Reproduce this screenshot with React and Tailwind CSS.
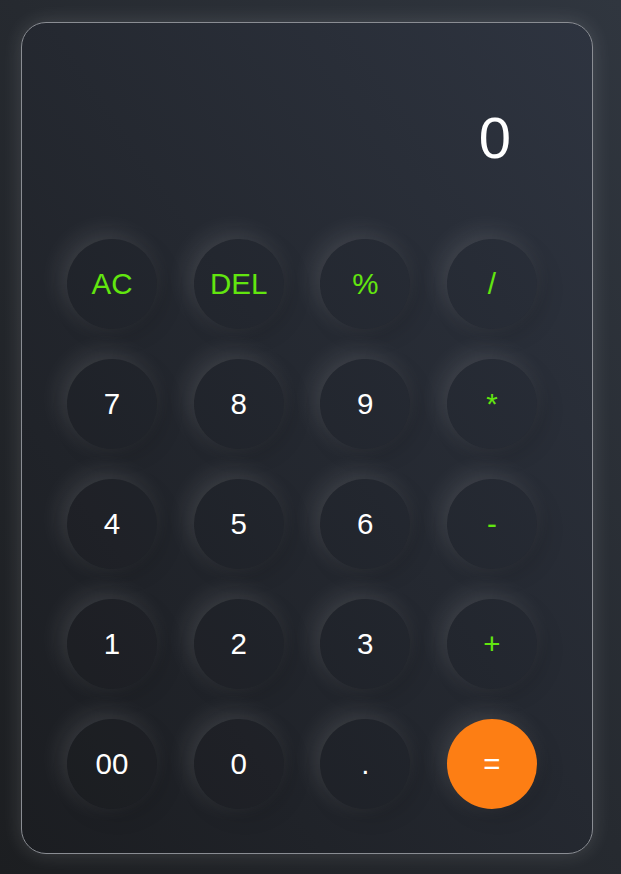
import React from "react";

const keys = [
  { t: "AC", g: true }, { t: "DEL", g: true }, { t: "%", g: true }, { t: "/", g: true },
  { t: "7" }, { t: "8" }, { t: "9" }, { t: "*", g: true },
  { t: "4" }, { t: "5" }, { t: "6" }, { t: "-", g: true },
  { t: "1" }, { t: "2" }, { t: "3" }, { t: "+", g: true },
  { t: "00" }, { t: "0" }, { t: "." }, { t: "=", eq: true },
];

export default function App() {
  return (
    <div
      className="min-h-[874px] w-full bg-gradient-to-bl from-[#30363f] to-[#1c1e21] pt-[22px] pl-[21px]"
      style={{ fontFamily: '"Liberation Sans", Arial, sans-serif' }}
    >
      <div className="w-[572px] h-[832px] rounded-[25px] border border-[#8a8d93] bg-gradient-to-bl from-[#2e3440] to-[#1b1d21] shadow-[0_0_20px_rgba(255,255,255,0.14)] flex flex-col pt-[86px]">
        <div className="h-[58px] text-[58px] leading-none text-white text-right pr-[81px]">0</div>
        <div className="mt-[72px] pl-[45px] grid grid-cols-[repeat(4,90px)] gap-x-[36.67px] gap-y-[30px]">
          {keys.map((k) => (
            <button
              key={k.t}
              className={
                "w-[90px] h-[90px] rounded-full flex items-center justify-center text-[29.5px] shadow-[-6px_-6px_24px_rgba(255,255,255,0.12),6px_6px_22px_rgba(0,0,0,0.15)] " +
                (k.eq
                  ? "bg-[#fd7e14] text-white"
                  : k.g
                  ? "bg-black/[0.03] text-[#62e60f]"
                  : "bg-black/[0.03] text-white")
              }
            >
              {k.t}
            </button>
          ))}
        </div>
      </div>
    </div>
  );
}
